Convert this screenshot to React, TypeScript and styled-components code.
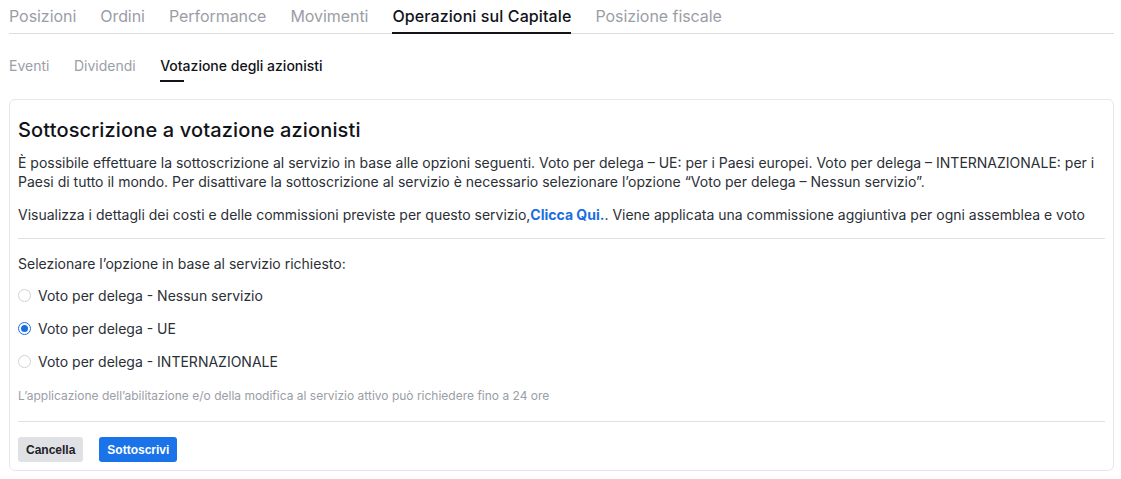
import React, { useState } from "react";
import styled, { createGlobalStyle } from "styled-components";

const Global = createGlobalStyle`
  html, body { margin: 0; padding: 0; background: #fff; }
  body { font-family: Inter, "Noto Sans", Arial, sans-serif; color: #2b2f36; }
  * { box-sizing: border-box; }
`;

const Page = styled.div`
  padding: 0 7px 0 9px;
  display: flex;
  flex-direction: column;
`;

const MainTabs = styled.nav`
  display: flex;
  gap: 24px;
  border-bottom: 1px solid #dcdcdc;
  height: 34px;
`;

const MainTab = styled.div<{ $active?: boolean }>`
  font-size: 16px;
  line-height: 20px;
  padding-top: 6px;
  color: ${(p) => (p.$active ? "#111318" : "#9a9ea6")};
  font-weight: ${(p) => (p.$active ? 500 : 400)};
  letter-spacing: ${(p) => (p.$active ? "0.1px" : "-0.05px")};
  border-bottom: 2px solid ${(p) => (p.$active ? "#111318" : "transparent")};
  margin-bottom: -1px;
  white-space: nowrap;
`;

const SubTabs = styled.nav`
  display: flex;
  gap: 24.5px;
  margin-top: 22px;
  height: 43px;
`;

const SubTab = styled.div<{ $active?: boolean }>`
  position: relative;
  font-size: 14px;
  line-height: 20px;
  color: ${(p) => (p.$active ? "#111318" : "#9a9ea6")};
  font-weight: ${(p) => (p.$active ? 500 : 400)};
  white-space: nowrap;
  &::after {
    content: "";
    display: ${(p) => (p.$active ? "block" : "none")};
    position: absolute;
    left: 0;
    top: 24px;
    width: 24px;
    height: 2px;
    background: #111318;
  }
`;

const Card = styled.section`
  border: 1px solid #e6e7ea;
  border-radius: 6px;
  padding: 16px 8px 8px 8px;
  display: flex;
  flex-direction: column;
`;

const Title = styled.h2`
  margin: 0;
  font-size: 20px;
  letter-spacing: 0.14px;
  line-height: 28px;
  font-weight: 500;
  color: #111318;
`;

const Para = styled.p`
  margin: 0;
  font-size: 14px;
  line-height: 19px;
  color: #2b2f36;
`;

const Intro = styled(Para)`
  margin-top: 9px;
`;

const CostPara = styled(Para)`
  margin-top: 14px;
`;

const Link = styled.a`
  color: #1a6fe0;
  font-weight: 700;
  text-decoration: none;
`;

const Divider = styled.hr`
  border: 0;
  border-top: 1px solid #dfe0e3;
  margin: 0;
`;

const FirstDivider = styled(Divider)`
  margin-top: 14px;
`;

const Prompt = styled(Para)`
  margin-top: 15px;
`;

const Options = styled.div`
  display: flex;
  flex-direction: column;
  gap: 14px;
  margin-top: 13px;
`;

const OptionRow = styled.label`
  display: flex;
  align-items: center;
  gap: 7px;
  font-size: 14px;
  line-height: 19px;
  color: #2b2f36;
  cursor: pointer;
`;

const Radio = styled.input.attrs({ type: "radio" })`
  appearance: none;
  margin: 0;
  width: 13px;
  height: 13px;
  border-radius: 50%;
  border: 1px solid #cfd2d7;
  background: #fff;
  display: grid;
  place-content: center;
  &:checked {
    border-color: #1a6fe0;
  }
  &:checked::before {
    content: "";
    width: 7px;
    height: 7px;
    border-radius: 50%;
    background: #1a6fe0;
  }
`;

const Note = styled.p`
  margin: 17px 0 0;
  font-size: 12px;
  line-height: 16px;
  color: #9a9ea6;
`;

const SecondDivider = styled(Divider)`
  margin-top: 17px;
`;

const Actions = styled.div`
  display: flex;
  gap: 16px;
  margin-top: 15px;
`;

const Button = styled.button<{ $primary?: boolean }>`
  font-family: "Liberation Sans", Arial, sans-serif;
  font-weight: 700;
  font-size: 12px;
  height: 25px;
  padding: 0 8px;
  border: 0;
  border-radius: 3px;
  background: ${(p) => (p.$primary ? "#1a73e8" : "#dfe1e5")};
  color: ${(p) => (p.$primary ? "#ffffff" : "#1d2026")};
  cursor: pointer;
`;

const mainTabs = ["Posizioni", "Ordini", "Performance", "Movimenti", "Operazioni sul Capitale", "Posizione fiscale"];
const subTabs = ["Eventi", "Dividendi", "Votazione degli azionisti"];
const options = [
  { id: "none", label: "Voto per delega - Nessun servizio" },
  { id: "ue", label: "Voto per delega - UE" },
  { id: "int", label: "Voto per delega - INTERNAZIONALE" },
];

export default function App() {
  const [choice, setChoice] = useState("ue");
  return (
    <Page>
      <Global />
      <MainTabs>
        {mainTabs.map((t) => (
          <MainTab key={t} $active={t === "Operazioni sul Capitale"}>{t}</MainTab>
        ))}
      </MainTabs>
      <SubTabs>
        {subTabs.map((t) => (
          <SubTab key={t} $active={t === "Votazione degli azionisti"}>{t}</SubTab>
        ))}
      </SubTabs>
      <Card>
        <Title>Sottoscrizione a votazione azionisti</Title>
        <Intro>
          È possibile effettuare la sottoscrizione al servizio in base alle opzioni seguenti. Voto per delega – UE: per i Paesi europei. Voto per delega – INTERNAZIONALE: per i Paesi di tutto il mondo. Per disattivare la sottoscrizione al servizio è necessario selezionare l’opzione “Voto per delega – Nessun servizio”.
        </Intro>
        <CostPara>
          Visualizza i dettagli dei costi e delle commissioni previste per questo servizio,<Link href="#">Clicca Qui.</Link>. Viene applicata una commissione aggiuntiva per ogni assemblea e voto
        </CostPara>
        <FirstDivider />
        <Prompt>Selezionare l’opzione in base al servizio richiesto:</Prompt>
        <Options>
          {options.map((o) => (
            <OptionRow key={o.id}>
              <Radio name="voto" checked={choice === o.id} onChange={() => setChoice(o.id)} />
              {o.label}
            </OptionRow>
          ))}
        </Options>
        <Note>L’applicazione dell’abilitazione e/o della modifica al servizio attivo può richiedere fino a 24 ore</Note>
        <SecondDivider />
        <Actions>
          <Button>Cancella</Button>
          <Button $primary>Sottoscrivi</Button>
        </Actions>
      </Card>
    </Page>
  );
}
